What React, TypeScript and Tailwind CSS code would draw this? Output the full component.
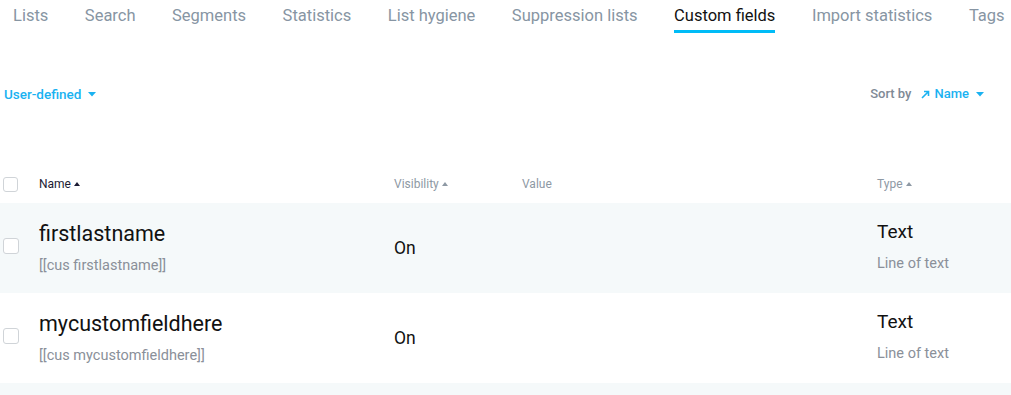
import React from 'react';

const tabs = [
  'Lists',
  'Search',
  'Segments',
  'Statistics',
  'List hygiene',
  'Suppression lists',
  'Custom fields',
  'Import statistics',
  'Tags',
];

const rows = [
  { name: 'firstlastname', visibility: 'On', type: 'Text', typeSub: 'Line of text', shaded: true },
  { name: 'mycustomfieldhere', visibility: 'On', type: 'Text', typeSub: 'Line of text', shaded: false },
];

const Caret = ({ className = '' }: { className?: string }) => (
  <svg width="8" height="5" viewBox="0 0 8 5" className={className}>
    <path d="M0 0h8L4 4.5z" fill="currentColor" />
  </svg>
);

const SortUp = () => (
  <svg width="6" height="4" viewBox="0 0 6 4" className="inline-block ml-[3px] mb-[2px]">
    <path d="M0 4h6L3 0z" fill="currentColor" />
  </svg>
);

const Checkbox = ({ size = 'h-[16px] w-[16px]' }: { size?: string }) => (
  <div className={`${size} rounded-[3px] border border-[#d0d4d8] bg-white`} />
);

export default function App() {
  return (
    <div className="w-[1011px] h-[395px] overflow-hidden bg-white font-['Roboto',sans-serif] flex flex-col">
      {/* tabs */}
      <nav className="flex h-[33px] shrink-0 pl-[13px] gap-[36.5px] whitespace-nowrap">
        {tabs.map((t) => {
          const active = t === 'Custom fields';
          return (
            <div
              key={t}
              className={`relative pt-[4px] text-[16.5px] leading-[23px] ${active ? 'text-[#111]' : 'text-[#8795a3]'}`}
            >
              {t}
              {active && <div className="absolute left-0 right-0 top-[30px] h-[3px] bg-[#00bcf7]" />}
            </div>
          );
        })}
      </nav>

      {/* filter bar */}
      <div className="flex shrink-0 items-center justify-between h-[20px] mt-[51px] pl-[4px] pr-[27px] text-[13px] font-medium">
        <div className="flex items-center gap-[7px] text-[#1ab2f1]">
          <span className="text-[13.5px]">User-defined</span>
          <Caret />
        </div>
        <div className="flex items-center">
          <span className="text-[#7f8a96] mr-[10px]">Sort by</span>
          <svg width="9" height="9" viewBox="0 0 9 9" className="text-[#1ab2f1] mr-[4px]">
            <path d="M1 8L7 2M3 1.5h4.5V6" stroke="currentColor" strokeWidth="1.6" fill="none" />
          </svg>
          <span className="text-[#1ab2f1] mr-[7px]">Name</span>
          <Caret className="text-[#1ab2f1]" />
        </div>
      </div>

      {/* table header */}
      <div className="grid shrink-0 grid-cols-[39px_355px_128px_355px_1fr] items-center h-[38px] mt-[61px] text-[12px]">
        <div className="pl-[3px]">
          <Checkbox size="h-[15px] w-[15px]" />
        </div>
        <div className="text-[#1b1b33]">
          Name
          <SortUp />
        </div>
        <div className="text-[#8e99a4]">
          Visibility
          <SortUp />
        </div>
        <div className="text-[#8e99a4]">Value</div>
        <div className="text-[#8e99a4]">
          Type
          <SortUp />
        </div>
      </div>

      {/* rows */}
      {rows.map((r) => (
        <div
          key={r.name}
          className={`grid shrink-0 grid-cols-[39px_355px_128px_355px_1fr] h-[90px] ${r.shaded ? 'bg-[#f5f9fa]' : 'bg-white'}`}
        >
          <div className="pl-[3px] pt-[35px]">
            <Checkbox />
          </div>
          <div className="flex flex-col pt-[18px]">
            <span className="text-[21.5px] leading-[26px] text-[#111]">{r.name}</span>
            <span className="mt-[10px] text-[14.5px] leading-[18px] text-[#8a9099]">[[cus {r.name}]]</span>
          </div>
          <div className="self-center text-[17.5px] leading-[22px] text-[#111]">{r.visibility}</div>
          <div />
          <div className="flex flex-col pt-[17px]">
            <span className="text-[19px] leading-[24px] text-[#111]">{r.type}</span>
            <span className="mt-[11px] text-[14.5px] leading-[18px] text-[#8a9099]">{r.typeSub}</span>
          </div>
        </div>
      ))}
      <div className="flex-1 bg-[#f5f9fa]" />
    </div>
  );
}
